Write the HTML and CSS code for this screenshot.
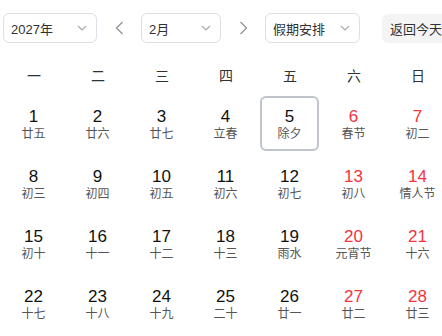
FILE: index.html
```html
<!DOCTYPE html>
<html>

<head>
  <meta charset="utf-8" />
  <title>万年历</title>
  <link rel="stylesheet" href="styles.css">
</head>

<body>
  <div class="calendar">
    <div class="toolbar">
      <div class="select year">
        <span>2027年</span>
        <svg class="caret" width="10" height="6" viewBox="0 0 10 6"><path d="M1 1 L5 5 L9 1" /></svg>
      </div>
      <div class="nav">
        <svg width="9" height="14" viewBox="0 0 9 14"><path d="M7.5 1 L1.5 7 L7.5 13" /></svg>
      </div>
      <div class="select month">
        <span>2月</span>
        <svg class="caret" width="10" height="6" viewBox="0 0 10 6"><path d="M1 1 L5 5 L9 1" /></svg>
      </div>
      <div class="nav">
        <svg width="9" height="14" viewBox="0 0 9 14"><path d="M1.5 1 L7.5 7 L1.5 13" /></svg>
      </div>
      <div class="select holiday">
        <span>假期安排</span>
        <svg class="caret" width="10" height="6" viewBox="0 0 10 6"><path d="M1 1 L5 5 L9 1" /></svg>
      </div>
      <button class="today" type="button">返回今天</button>
    </div>

    <div class="grid">
      <div class="week">一</div>
      <div class="week">二</div>
      <div class="week">三</div>
      <div class="week">四</div>
      <div class="week">五</div>
      <div class="week">六</div>
      <div class="week">日</div>

      <div class="day"><span class="num">1</span><span class="lunar">廿五</span></div>
      <div class="day"><span class="num">2</span><span class="lunar">廿六</span></div>
      <div class="day"><span class="num">3</span><span class="lunar">廿七</span></div>
      <div class="day"><span class="num">4</span><span class="lunar">立春</span></div>
      <div class="day selected"><span class="num">5</span><span class="lunar">除夕</span></div>
      <div class="day red"><span class="num">6</span><span class="lunar">春节</span></div>
      <div class="day red"><span class="num">7</span><span class="lunar">初二</span></div>

      <div class="day"><span class="num">8</span><span class="lunar">初三</span></div>
      <div class="day"><span class="num">9</span><span class="lunar">初四</span></div>
      <div class="day"><span class="num">10</span><span class="lunar">初五</span></div>
      <div class="day"><span class="num">11</span><span class="lunar">初六</span></div>
      <div class="day"><span class="num">12</span><span class="lunar">初七</span></div>
      <div class="day red"><span class="num">13</span><span class="lunar">初八</span></div>
      <div class="day red"><span class="num">14</span><span class="lunar">情人节</span></div>

      <div class="day"><span class="num">15</span><span class="lunar">初十</span></div>
      <div class="day"><span class="num">16</span><span class="lunar">十一</span></div>
      <div class="day"><span class="num">17</span><span class="lunar">十二</span></div>
      <div class="day"><span class="num">18</span><span class="lunar">十三</span></div>
      <div class="day"><span class="num">19</span><span class="lunar">雨水</span></div>
      <div class="day red"><span class="num">20</span><span class="lunar">元宵节</span></div>
      <div class="day red"><span class="num">21</span><span class="lunar">十六</span></div>

      <div class="day"><span class="num">22</span><span class="lunar">十七</span></div>
      <div class="day"><span class="num">23</span><span class="lunar">十八</span></div>
      <div class="day"><span class="num">24</span><span class="lunar">十九</span></div>
      <div class="day"><span class="num">25</span><span class="lunar">二十</span></div>
      <div class="day"><span class="num">26</span><span class="lunar">廿一</span></div>
      <div class="day red"><span class="num">27</span><span class="lunar">廿二</span></div>
      <div class="day red"><span class="num">28</span><span class="lunar">廿三</span></div>
    </div>
  </div>
</body>

</html>
```

FILE: styles.css
```css
html,
body {
  margin: 0;
  padding: 0;
  background: #fff;
  overflow: hidden;
}

.calendar {
  width: 452px;
  font-family: "Liberation Sans", "Noto Sans CJK SC", sans-serif;
  color: #1a1a1a;
}

.toolbar {
  display: flex;
  align-items: center;
  padding: 13px 0 0 3px;
  white-space: nowrap;
}

.select {
  box-sizing: border-box;
  display: flex;
  align-items: center;
  justify-content: space-between;
  height: 30px;
  padding: 0 9px 0 7px;
  border: 1px solid #dcdfe6;
  border-radius: 6px;
  font-size: 13px;
  color: #303133;
}

.select.year {
  width: 94px;
}

.select.month {
  width: 80px;
}

.select.holiday {
  width: 95px;
}

.caret path {
  fill: none;
  stroke: #a8abb2;
  stroke-width: 1.2;
}

.nav {
  display: flex;
  justify-content: center;
  align-items: center;
  width: 44px;
  height: 30px;
}

.nav path {
  fill: none;
  stroke: #909399;
  stroke-width: 1.3;
}

.today {
  box-sizing: border-box;
  height: 29px;
  margin-left: 22px;
  padding: 0 8px;
  border: none;
  border-radius: 6px;
  background: #f4f4f5;
  font-family: inherit;
  font-size: 13px;
  color: #303133;
}

.grid {
  display: grid;
  grid-template-columns: repeat(7, 64px);
  grid-template-rows: 36px;
  grid-auto-rows: 60px;
  margin: 15px 0 0 2px;
}

.week {
  height: 36px;
  line-height: 36px;
  text-align: center;
  font-size: 14px;
  color: #303133;
}

.day {
  box-sizing: border-box;
  display: flex;
  flex-direction: column;
  align-items: center;
  width: 59px;
  height: 55px;
  margin: 2px 0 0 2px;
  padding-top: 9px;
  border: 2px solid transparent;
  border-radius: 6px;
}

.day.selected {
  border-color: #c0c4cc;
}

.num {
  font-size: 17px;
  line-height: 20px;
  color: #111;
}

.lunar {
  font-size: 12px;
  line-height: 14px;
  color: #555;
}

.day.red .num {
  color: #f4333f;
}
```
